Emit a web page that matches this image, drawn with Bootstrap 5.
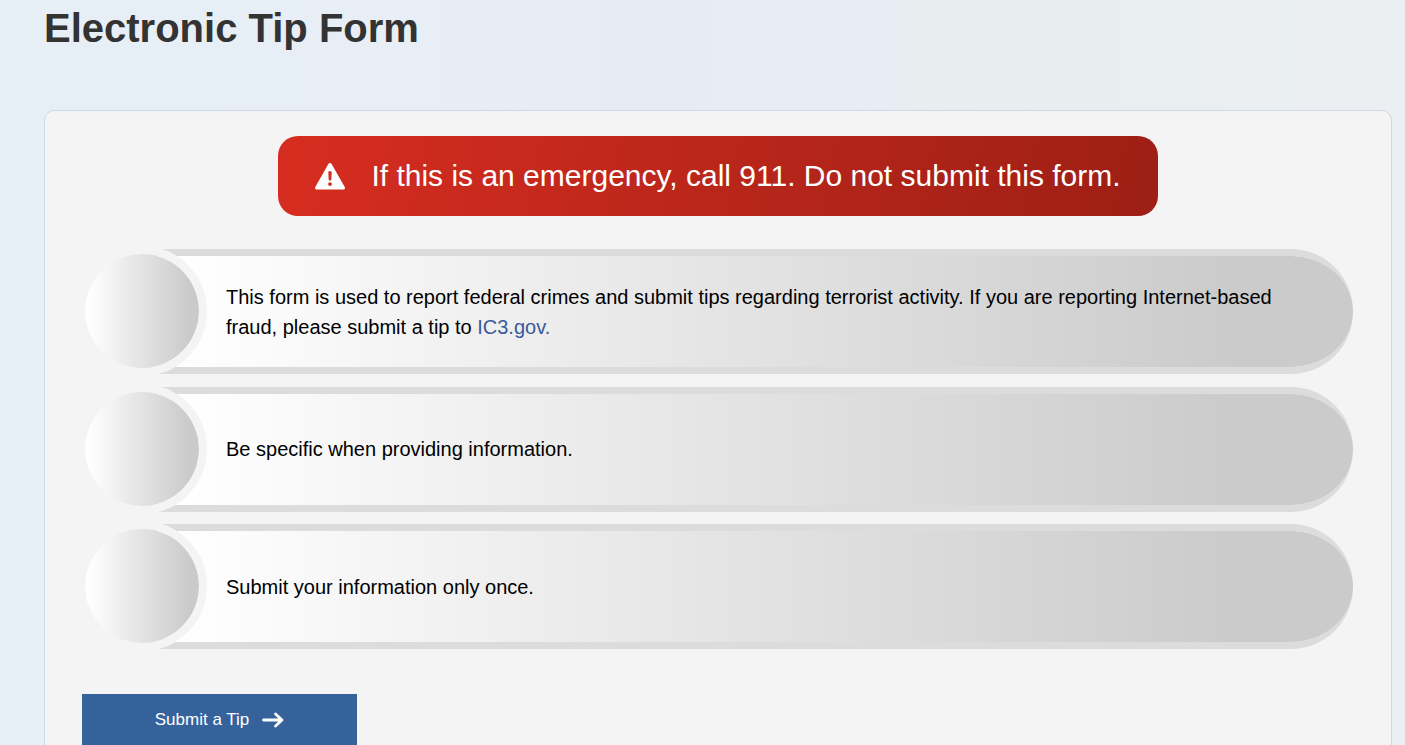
<!DOCTYPE html>
<html lang="en">
<head>
<meta charset="utf-8">
<meta name="viewport" content="width=device-width, initial-scale=1">
<title>Electronic Tip Form</title>
<link href="https://cdn.jsdelivr.net/npm/bootstrap@5.3.0/dist/css/bootstrap.min.css" rel="stylesheet">
<style>
  body {
    font-family: "Liberation Sans", Arial, sans-serif;
    color: #000;
    min-height: 100vh;
    background: linear-gradient(90deg, #e7eff6 0%, #e7eef5 30%, #e7ecf4 45%, #e8ecf5 62%, #e8edf0 65%, #ebeff2 100%);
  }
  .page-wrap { padding: 4px 13px 0 44px; }
  .page-title { font-size: 40px; line-height: 48px; color: #333; margin-bottom: 58px; }
  .tip-panel { background: #f4f4f4; border: 1px solid #cfd8e6; border-radius: 10px; padding: 25px 37px 40px; }
  .emergency {
    gap: 26px;
    padding: 16px 37px;
    margin-bottom: 33px;
    border-radius: 20px;
    color: #fff;
    font-size: 30px;
    line-height: 48px;
    background: linear-gradient(100deg, #d72d20, #9d1f15);
  }
  .steps { min-height: 400px; margin-bottom: 45px; padding: 0 1px 0 3px; }
  .step { height: 125px; }
  .step-dot {
    width: 130px;
    height: 130px;
    margin: -3px -65px 0 -8px;
    border: 8px solid #f4f4f4;
    border-radius: 50%;
    background: linear-gradient(90deg, #fff 3%, #cacaca 92%) padding-box;
    z-index: 1;
  }
  .step-bar {
    min-width: 0;
    padding: 0 60px 0 84px;
    border: solid #dcdcdc;
    border-width: 7px 0;
    border-radius: 0 62px 62px 0;
    background: linear-gradient(90deg, #fff 3%, #cbcbcb 90%) padding-box;
    font-size: 20px;
    line-height: 30px;
  }
  .step-bar a { color: #3a5a98; }
  .btn-tip {
    --bs-btn-color: #fff;
    --bs-btn-bg: #36629c;
    --bs-btn-hover-color: #fff;
    --bs-btn-hover-bg: #2c5285;
    width: 275px;
    height: 52px;
    font-size: 17px;
    gap: 12px;
  }
</style>
</head>
<body>
<main class="page-wrap">
  <h1 class="page-title fw-bold">Electronic Tip Form</h1>
  <section class="tip-panel">
    <div class="d-flex justify-content-center">
      <div class="emergency d-flex align-items-center" role="alert">
        <svg width="30" height="28" viewBox="0 0 30 28" aria-hidden="true">
          <path fill="#fff" fill-rule="evenodd" d="M13.500 1.800a1.800 1.800 0 0 1 3 0L29.700 25a1.700 1.700 0 0 1-1.500 2.600H1.800A1.700 1.700 0 0 1 .3 25zM13.300 10.200l.4 7.600q.1.800.7.800h1.200q.6 0 .7-.8l.4-7.600q0-1-.9-1h-1.600q-.9 0-.9 1zM15 20.200a1.900 1.900 0 1 0 0 3.800 1.900 1.900 0 0 0 0-3.800z"/>
        </svg>
        <span>If this is an emergency, call 911. Do not submit this form.</span>
      </div>
    </div>
    <ul class="steps list-unstyled d-flex flex-column justify-content-between">
      <li class="step d-flex">
        <span class="step-dot flex-shrink-0"></span>
        <div class="step-bar flex-grow-1 d-flex align-items-center">
          <p class="mb-0">This form is used to report federal crimes and submit tips regarding terrorist activity. If you are reporting Internet-based fraud, please submit a tip to <a href="#" class="text-decoration-none">IC3.gov.</a></p>
        </div>
      </li>
      <li class="step d-flex">
        <span class="step-dot flex-shrink-0"></span>
        <div class="step-bar flex-grow-1 d-flex align-items-center">
          <p class="mb-0">Be specific when providing information.</p>
        </div>
      </li>
      <li class="step d-flex">
        <span class="step-dot flex-shrink-0"></span>
        <div class="step-bar flex-grow-1 d-flex align-items-center">
          <p class="mb-0">Submit your information only once.</p>
        </div>
      </li>
    </ul>
    <button type="button" class="btn btn-tip rounded-0 border-0 d-flex align-items-center justify-content-center">
      Submit a Tip
      <svg width="23" height="16" viewBox="0 0 23 16" fill="none" stroke="#fff" stroke-width="2.800" stroke-linecap="round" stroke-linejoin="round" aria-hidden="true"><path d="M2.500 8h18M14.500 2l6.500 6-6.500 6"/></svg>
    </button>
  </section>
</main>
<script src="https://cdn.jsdelivr.net/npm/bootstrap@5.3.0/dist/js/bootstrap.bundle.min.js"></script>
</body>
</html>
